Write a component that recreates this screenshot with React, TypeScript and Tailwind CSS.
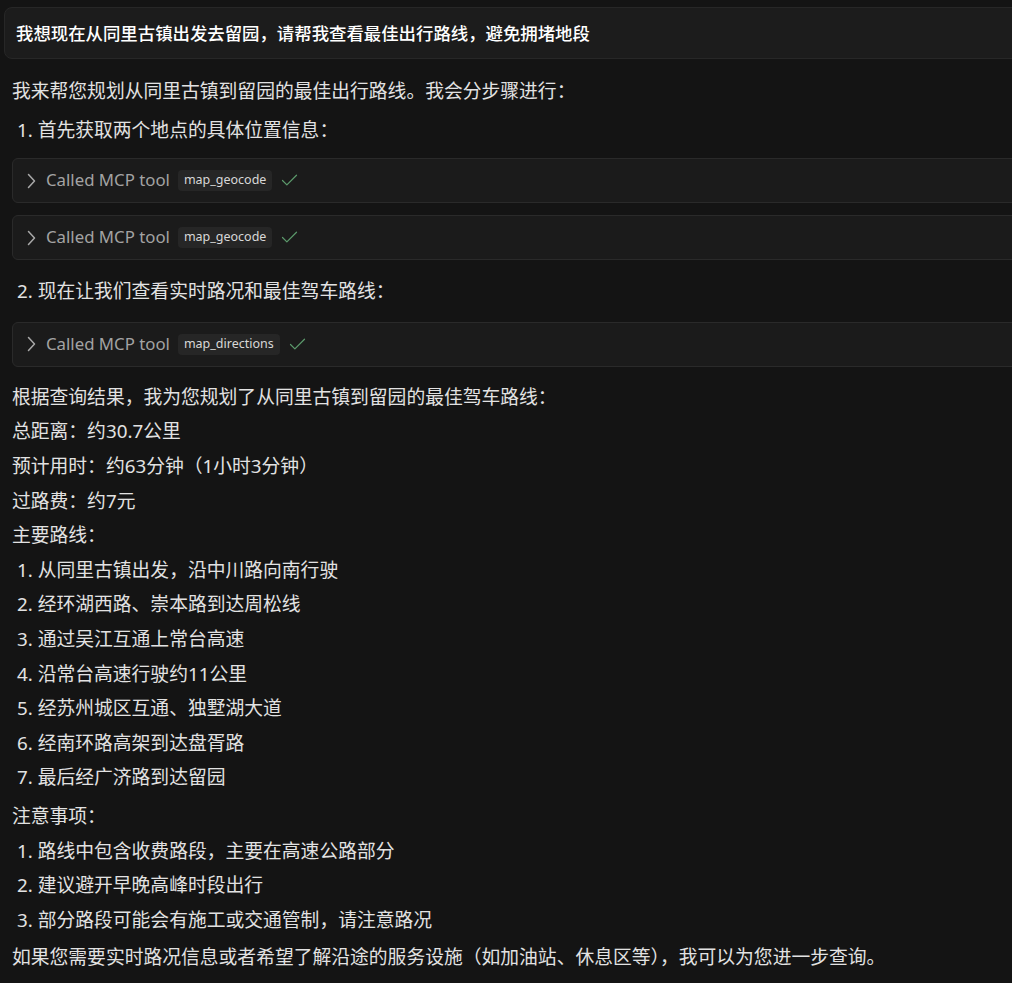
import { Check } from "lucide-react";

const font = { fontFamily: '"Noto Sans", "Noto Sans CJK SC", sans-serif' };

function Chevron() {
  return (
    <svg width="9" height="16" viewBox="0 0 9 16" fill="none" className="text-[#a8a8a8]">
      <path d="M1.5 1.5 7.5 8l-6 6.5" stroke="currentColor" strokeWidth="1.5" strokeLinecap="round" strokeLinejoin="round" />
    </svg>
  );
}

function ToolCall({ name, className = "" }: { name: string; className?: string }) {
  return (
    <div className={`h-[45px] rounded-md border border-[#2a2a2a] bg-[#1b1b1b] flex items-center pl-[14px] ${className}`}>
      <Chevron />
      <span className="ml-[10px] text-[16.8px] text-[#a3a3a3]">Called MCP tool</span>
      <span className="ml-[8px] h-[21px] px-[6px] rounded-[4px] bg-[#262626] text-[12.5px] text-[#d8d8d8] flex items-center leading-none pb-[1px]">
        {name}
      </span>
      <Check className="ml-[7px] w-[21px] h-[21px] text-[#5c9a6c]" strokeWidth={1.4} />
    </div>
  );
}

export default function App() {
  const route = [
    "从同里古镇出发，沿中川路向南行驶",
    "经环湖西路、崇本路到达周松线",
    "通过吴江互通上常台高速",
    "沿常台高速行驶约11公里",
    "经苏州城区互通、独墅湖大道",
    "经南环路高架到达盘胥路",
    "最后经广济路到达留园",
  ];
  const notes = [
    "路线中包含收费路段，主要在高速公路部分",
    "建议避开早晚高峰时段出行",
    "部分路段可能会有施工或交通管制，请注意路况",
  ];

  return (
    <div className="min-h-screen w-full overflow-hidden bg-[#141414] text-[#e2e2e2]" style={font}>
      <div className="w-[1060px] pt-[7px]">
        {/* user message */}
        <div className="ml-[4px] h-[52px] rounded-lg border border-[#272727] bg-[#1c1c1c] flex items-center pl-[11px]">
          <span className="text-[17.4px] font-medium text-white">
            我想现在从同里古镇出发去留园，请帮我查看最佳出行路线，避免拥堵地段
          </span>
        </div>

        <div className="pl-[12px] mt-[15px] text-[18.8px] leading-[34.6px]">
          <p>我来帮您规划从同里古镇到留园的最佳出行路线。我会分步骤进行：</p>
          <p className="mt-[4px] pl-[5px]">1. 首先获取两个地点的具体位置信息：</p>

          <ToolCall name="map_geocode" className="mt-[11px]" />
          <ToolCall name="map_geocode" className="mt-[12px]" />

          <p className="mt-[14px] pl-[5px]">2. 现在让我们查看实时路况和最佳驾车路线：</p>

          <ToolCall name="map_directions" className="mt-[13px]" />

          <p className="mt-[13px]">根据查询结果，我为您规划了从同里古镇到留园的最佳驾车路线：</p>
          <p>总距离：约30.7公里</p>
          <p>预计用时：约63分钟（1小时3分钟）</p>
          <p>过路费：约7元</p>
          <p>主要路线：</p>
          <ol className="pl-[5px] mb-[4px]">
            {route.map((r, i) => (
              <li key={i}>
                {i + 1}. {r}
              </li>
            ))}
          </ol>
          <p>注意事项：</p>
          <ol className="pl-[5px] mb-[3px]">
            {notes.map((r, i) => (
              <li key={i}>
                {i + 1}. {r}
              </li>
            ))}
          </ol>
          <p>如果您需要实时路况信息或者希望了解沿途的服务设施（如加油站、休息区等），我可以为您进一步查询。</p>
        </div>
      </div>
    </div>
  );
}
